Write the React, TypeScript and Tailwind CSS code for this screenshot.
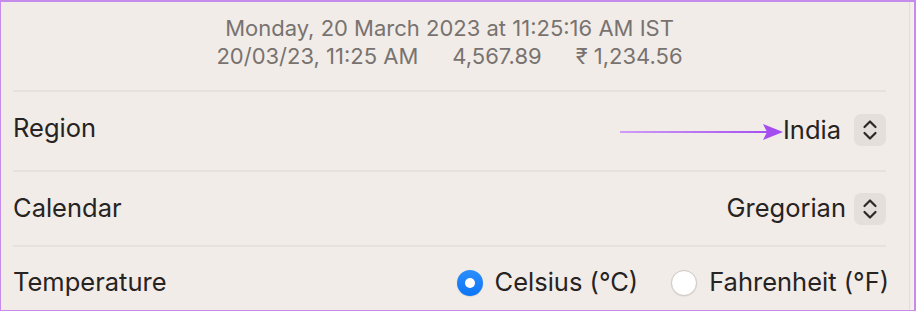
import React from 'react';

const sans = { fontFamily: 'Inter, "Noto Sans", sans-serif' };

function Stepper() {
  return (
    <div className="w-[32px] h-[32px] rounded-[7px] bg-[#e4dfdb] flex items-center justify-center">
      <svg width="16" height="22" viewBox="0 0 16 22" fill="none">
        <path d="M2.5 8 L8 2.5 L13.5 8" stroke="#2b2826" strokeWidth="2.2" strokeLinecap="round" strokeLinejoin="round" />
        <path d="M2.5 14 L8 19.5 L13.5 14" stroke="#2b2826" strokeWidth="2.2" strokeLinecap="round" strokeLinejoin="round" />
      </svg>
    </div>
  );
}

function Separator() {
  return <div className="h-[2px] bg-[#e6e1dd]" />;
}

function Radio({ checked }: { checked?: boolean }) {
  if (checked) {
    return (
      <div className="w-[26px] h-[26px] rounded-full bg-gradient-to-b from-[#2a8efc] to-[#0a75f5] flex items-center justify-center shadow-[0_0.5px_1px_rgba(0,0,0,0.2)]">
        <div className="w-[10px] h-[10px] rounded-full bg-white" />
      </div>
    );
  }
  return <div className="w-[26px] h-[26px] rounded-full bg-white border border-[#cdc9c6] shadow-[0_0.5px_1px_rgba(0,0,0,0.1)]" />;
}

export default function App() {
  return (
    <div
      className="w-[916px] h-[311px] overflow-hidden bg-[#f1ece8] border-t-2 border-l border-b border-r-2 border-[#c58ceb] flex"
      style={sans}
    >
      <div className="relative w-[908px] shrink-0 pl-[12px] pr-[23px]">
        {/* preview */}
        <div className="pt-[12px] pb-[20px] text-center text-[#787370] text-[22px] leading-[28px]">
          <div>Monday, 20 March 2023 at 11:25:16 AM IST</div>
          <div className="flex justify-center gap-[34px]">
            <span>20/03/23, 11:25 AM</span>
            <span>4,567.89</span>
            <span>₹ 1,234.56</span>
          </div>
        </div>
        <Separator />

        {/* region */}
        <div className="relative h-[78px] pb-[5px] flex items-center justify-between text-[25.5px] text-[#262322]">
          <span>Region</span>
          <div className="flex items-center gap-[13px] pt-[3px]">
            <span>India</span>
            <Stepper />
          </div>
          <svg className="absolute left-[607px] top-[31px]" width="164" height="18" viewBox="0 0 164 18" fill="none">
            <defs>
              <linearGradient id="arr" gradientUnits="userSpaceOnUse" x1="0" y1="9" x2="150" y2="9">
                <stop offset="0" stopColor="#cf9cf6" />
                <stop offset="1" stopColor="#a44ef0" />
              </linearGradient>
            </defs>
            <path d="M0 9 L150 9" stroke="url(#arr)" strokeWidth="2.2" />
            <path d="M143 1 L163 9 L143 17 L147 9 Z" fill="#a44ef0" />
          </svg>
        </div>
        <Separator />

        {/* calendar */}
        <div className="h-[73px] flex items-center justify-between text-[25.5px] text-[#262322]">
          <span>Calendar</span>
          <div className="flex items-center gap-[8px]">
            <span>Gregorian</span>
            <Stepper />
          </div>
        </div>
        <Separator />

        {/* temperature */}
        <div className="h-[71px] flex items-center justify-between text-[25.5px] text-[#262322]">
          <span>Temperature</span>
          <div className="flex items-center">
            <div className="flex items-center gap-[12px]">
              <Radio checked />
              <span>Celsius (°C)</span>
            </div>
            <div className="flex items-center gap-[12px] ml-[33px] mr-[-3px]">
              <Radio />
              <span>Fahrenheit (°F)</span>
            </div>
          </div>
        </div>
      </div>
      <div className="w-px bg-[#e2ddd9] shrink-0" />
      <div className="flex-1 bg-[#f3eeea]" />
    </div>
  );
}
